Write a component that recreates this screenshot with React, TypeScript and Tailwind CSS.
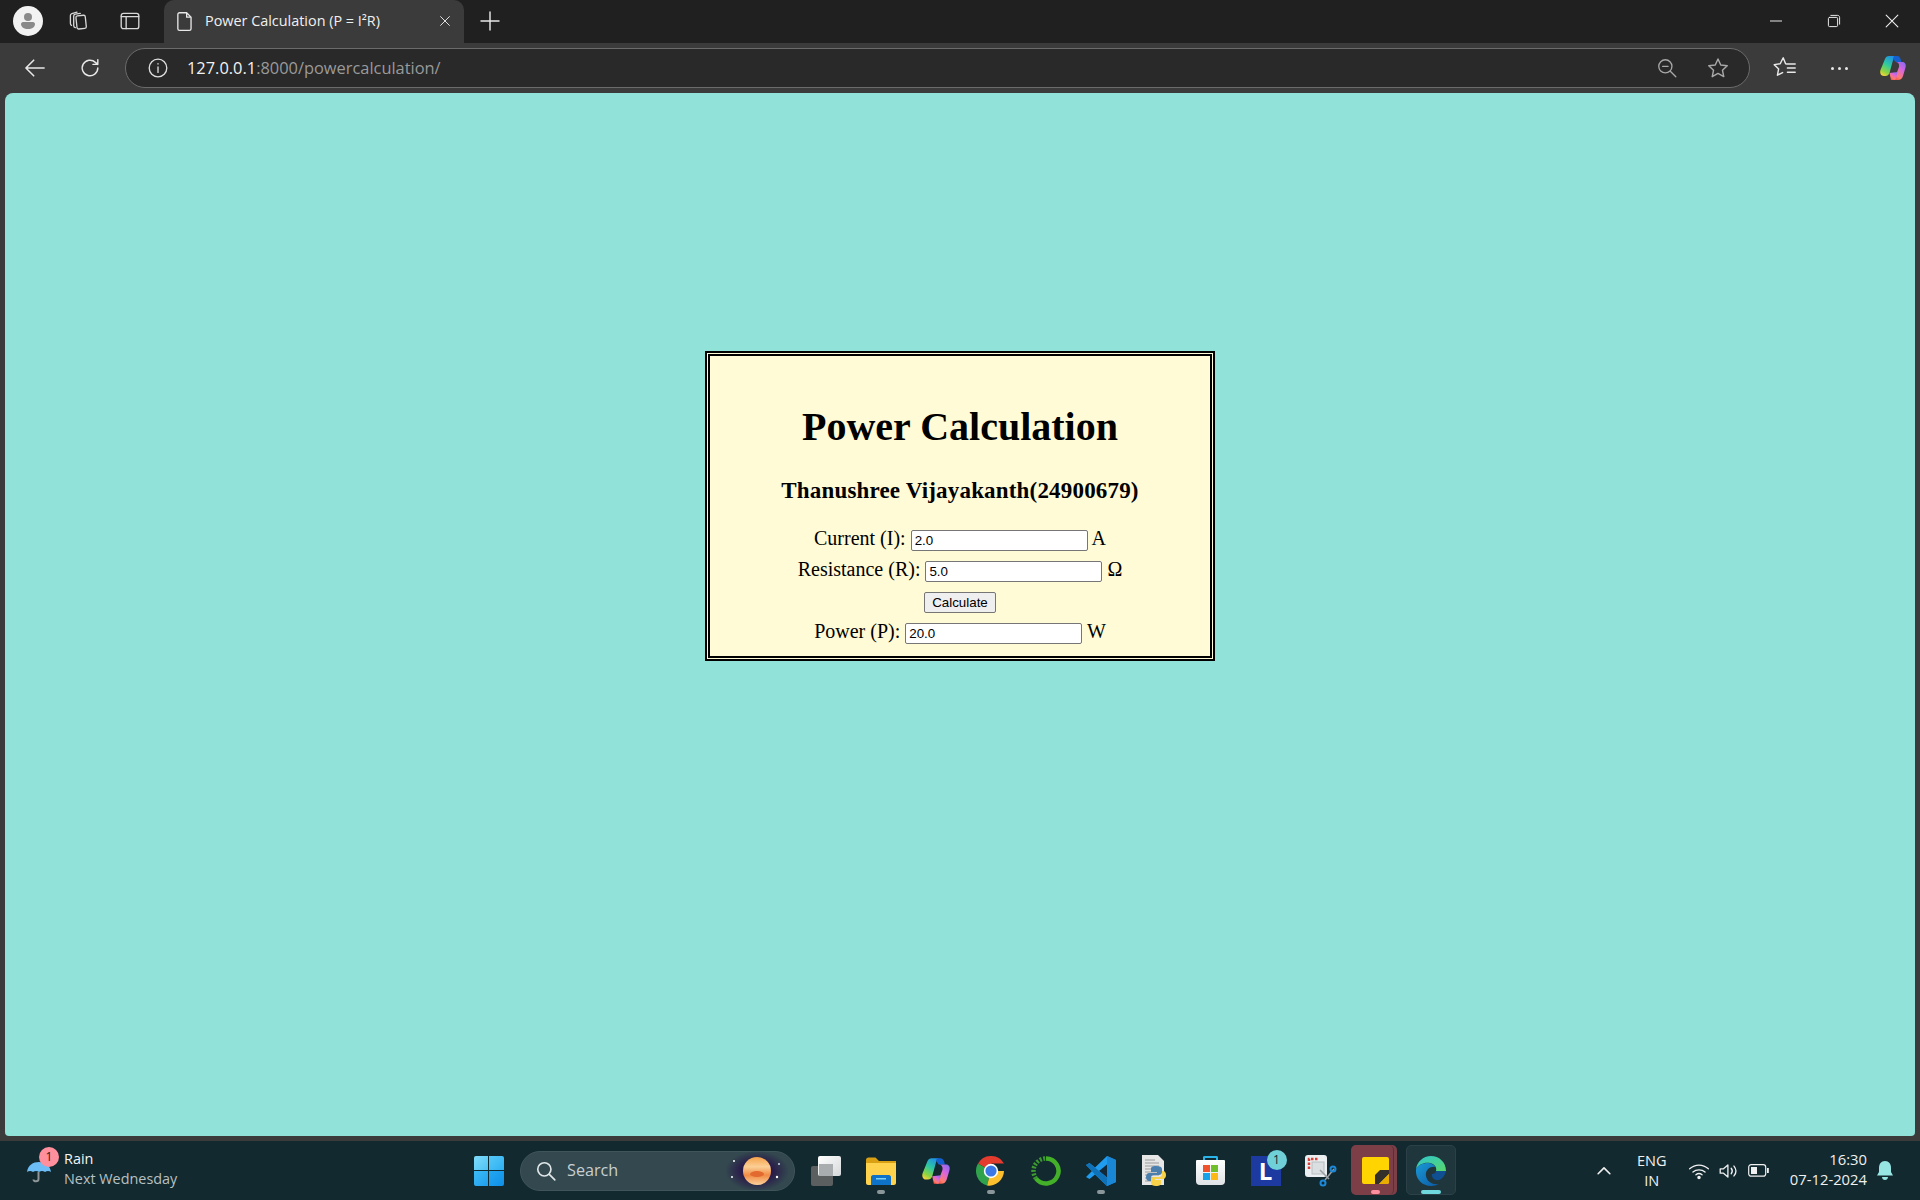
import React from 'react';

const SEGOE = "[font-family:'Open_Sans','Noto_Sans',sans-serif]";

const Stroke = ({ size = 20, children, className = '' }: { size?: number; children: React.ReactNode; className?: string }) => (
  <svg width={size} height={size} viewBox="0 0 20 20" fill="none" stroke="currentColor" strokeWidth="1.2" strokeLinecap="round" strokeLinejoin="round" className={className}>
    {children}
  </svg>
);

const CopilotIcon = ({ size = 28 }: { size?: number }) => (
  <svg width={size} height={size} viewBox="0 0 28 28">
    <defs>
      <linearGradient id={`cpA${size}`} x1="0.7" y1="0" x2="0.2" y2="1">
        <stop offset="0" stopColor="#1f8fe8" />
        <stop offset="0.45" stopColor="#2fc9a0" />
        <stop offset="0.8" stopColor="#8fd440" />
        <stop offset="1" stopColor="#f5d33d" />
      </linearGradient>
      <linearGradient id={`cpB${size}`} x1="1" y1="0" x2="0.2" y2="1">
        <stop offset="0" stopColor="#7a6cf0" />
        <stop offset="0.4" stopColor="#d865e0" />
        <stop offset="0.75" stopColor="#ff7d6a" />
        <stop offset="1" stopColor="#f0453a" />
      </linearGradient>
    </defs>
    <path d="M10 2h8c-2 0-3 1-3.700 3L10.500 19c-.8 2-2 3-4 3H5c-3 0-4.500-3-3.500-6L6 5c.7-2 2-3 4-3z" fill={`url(#cpA${size})`} />
    <path d="M15 2h3c2 0 3 1.300 3.500 3l.9 3H16.500L14.300 5c.2-1.500 .2-3 .7-3z" fill="#1560d0" />
    <path d="M17 8h6.500c2.500 0 4 2.500 3 5.500L24 22c-.8 2.500-2.500 4-5 4h-7c2 0 3.500-1 4.200-3L20 13c.6-2-.5-5-3-5z" fill={`url(#cpB${size})`} />
    <path d="M10.500 19l1.500 7h3c1.500 0 2-1 2.500-3l1-5z" fill={`url(#cpB${size})`} />
  </svg>
);

const WindowsLogo = () => (
  <div className="grid grid-cols-2 gap-[1px] w-[30px] h-[30px]">
    <div className="bg-gradient-to-br from-[#7fdcfb] to-[#4cc2f5] rounded-tl-[2px]" />
    <div className="bg-gradient-to-br from-[#55c8f7] to-[#2cb0f2] rounded-tr-[2px]" />
    <div className="bg-gradient-to-br from-[#3cbcf6] to-[#1f9fee] rounded-bl-[2px]" />
    <div className="bg-gradient-to-br from-[#22a8f2] to-[#0f8fe8] rounded-br-[2px]" />
  </div>
);

const Jupiter = () => (
  <svg width="64" height="40" viewBox="0 0 64 40">
    <defs>
      <radialGradient id="sky">
        <stop offset="0.5" stopColor="#2a1c4a" />
        <stop offset="1" stopColor="#2a1c4a" stopOpacity="0" />
      </radialGradient>
      <linearGradient id="planet" x1="0" y1="0" x2="0" y2="1">
        <stop offset="0" stopColor="#f7a24a" />
        <stop offset="0.35" stopColor="#fbcf95" />
        <stop offset="0.65" stopColor="#f08b45" />
        <stop offset="1" stopColor="#fbd39c" />
      </linearGradient>
    </defs>
    <ellipse cx="32" cy="20" rx="32" ry="20" fill="url(#sky)" />
    <circle cx="32" cy="20" r="14" fill="url(#planet)" />
    <ellipse cx="32" cy="23" rx="7" ry="3" fill="#e2692f" />
    <circle cx="9" cy="10" r="1" fill="#fff" />
    <circle cx="7" cy="26" r="1" fill="#fff" />
    <circle cx="54" cy="13" r="1" fill="#cde" />
    <circle cx="52" cy="26" r="1.2" fill="#fff" />
  </svg>
);

const TaskView = () => (
  <div className="relative w-[30px] h-[30px]">
    <div className="absolute left-0 bottom-0 w-[22px] h-[20px] bg-[#5c5f60] rounded-[2px]" />
    <div className="absolute right-0 top-0 w-[23px] h-[20px] bg-gradient-to-br from-white to-[#d5d8da] rounded-[2px]" />
    <div className="absolute left-[8px] top-[8px] w-[14px] h-[12px] bg-[#a9adaf]" />
  </div>
);

const FolderIcon = () => (
  <svg width="30" height="28" viewBox="0 0 30 28">
    <path d="M0 3c0-1.500 1-2.500 2.500-2.500h7L13 4h17v4H0z" fill="#d9a013" />
    <path d="M0 6h30v20c0 1-1 2-2 2H2c-1 0-2-1-2-2z" fill="#ffd24d" />
    <path d="M5 20c0-1 1-2 2-2h16c1 0 2 1 2 2v8H5z" fill="#0f72c9" />
    <rect x="10" y="21" width="10" height="1.500" fill="#7fd0f5" />
  </svg>
);

const ChromeIcon = () => (
  <svg width="30" height="30" viewBox="0 0 30 30">
    <path d="M15 15 2 7.500A15 15 0 0 1 28 7.500H15z" fill="#e33b2e" />
    <path d="M15 15 2 7.500A15 15 0 0 0 11 29.500z" fill="#2fa24b" />
    <path d="M15 15h13A15 15 0 0 1 11 29.500z" fill="#fbc02d" />
    <circle cx="15" cy="15" r="7.200" fill="#fff" />
    <circle cx="15" cy="15" r="5.600" fill="#3b78e7" />
  </svg>
);

const RingIcon = () => (
  <svg width="30" height="30" viewBox="0 0 30 30" fill="none">
    <path d="M15 2.500A12.500 12.500 0 1 1 5 22.500" stroke="#44b02a" strokeWidth="4.500" />
    <path d="M5 22.500A12.500 12.500 0 0 1 15 2.500" stroke="#3d9a30" strokeWidth="4.500" strokeDasharray="2 1.500" />
  </svg>
);

const VsCodeIcon = () => (
  <svg width="30" height="30" viewBox="0 0 30 30">
    <path d="M21 0 30 4v22l-9 4L9 18.500 3.500 23 0 21l6-6-6-6 3.500-2L9 11.500z" fill="#1f9cf0" />
    <path d="M21 0v30l9-4V4z" fill="#1a86d6" />
    <path d="M21 8.500 13 15l8 6.500z" fill="#12293a" />
    <path d="M0 9l3.500-2L21 21.500V30L9 18.500z" fill="#0f72b8" />
  </svg>
);

const PythonFileIcon = () => (
  <svg width="30" height="32" viewBox="0 0 30 32">
    <path d="M1 0h16l6 6v24H1z" fill="#e6e6e6" />
    <g stroke="#9a9a9a" strokeWidth="1">
      <path d="M4 5h10M4 8h14M4 11h14M4 14h14M4 17h14M4 20h14M4 23h14M4 26h14" />
    </g>
    <path d="M15 11c-4 0-5 1-5 3v3h6v1H8c-2 0-3 2-3 4s1 4 3 4h2v-3c0-2 1-3 3-3h5c1.500 0 3-1 3-3v-3c0-2-2-3-6-3z" fill="#4a7fae" />
    <path d="M15 31c4 0 5-1 5-3v-3h-6v-1h8c2 0 3-2 3-4s-1-4-3-4h-1v3c0 2-1 3-3 3h-5c-1.500 0-3 1-3 3v3c0 2 2 3 5 3z" fill="#f7d148" />
  </svg>
);

const StoreIcon = () => (
  <div className="relative w-[30px] h-[30px]">
    <div className="absolute left-[7px] top-0 w-[15px] h-[7px] border-2 border-b-0 border-[#2bb4ea] rounded-t-[2px]" />
    <div className="absolute left-0 top-[4px] w-[29px] h-[25px] rounded-b-[4px] rounded-t-[1px] bg-gradient-to-b from-white to-[#dfe3e6] flex items-center justify-center">
      <div className="grid grid-cols-2 gap-[1px] w-[15px] h-[15px]">
        <div className="bg-[#f0532c]" />
        <div className="bg-[#6fbf2a]" />
        <div className="bg-[#16a2e8]" />
        <div className="bg-[#fdb813]" />
      </div>
    </div>
  </div>
);

const LIcon = () => (
  <div className="relative w-[30px] h-[30px] bg-[#1d3aa0] flex items-center justify-center">
    <span className="text-white text-[24px] font-bold leading-none [font-family:'Open_Sans',sans-serif]">L</span>
    <div className="absolute -top-[6px] -right-[6px] w-[20px] h-[20px] rounded-full bg-[#6fd0d8] flex items-center justify-center text-[12px] text-[#12292f] [font-family:'Open_Sans',sans-serif]">1</div>
  </div>
);

const SnipIcon = () => (
  <svg width="32" height="32" viewBox="0 0 32 32" fill="none">
    <rect x="0" y="0" width="22" height="22" rx="3" fill="#eceff1" />
    <path d="M4 14V4h10" stroke="#d8413a" strokeWidth="2.500" strokeDasharray="2.500 1.500" />
    <rect x="7" y="7" width="12" height="12" fill="#dbdfe2" stroke="#b8bdc0" />
    <path d="M15 15l9 9M29 14 20 25" stroke="#9aa0a4" strokeWidth="1.500" />
    <circle cx="28" cy="14" r="2.500" stroke="#1e88d8" strokeWidth="2" />
    <circle cx="18" cy="28" r="2.500" stroke="#1e88d8" strokeWidth="2" />
  </svg>
);

const StickyIcon = () => (
  <svg width="27" height="27" viewBox="0 0 27 27">
    <rect width="27" height="27" rx="2" fill="#ffd400" />
    <path d="M13 27V18l5-5h9v4L17 27z" fill="#33302c" />
    <path d="M17 27 27 17v8c0 1-1 2-2 2z" fill="#e8ad00" />
  </svg>
);

const EdgeIcon = () => (
  <svg width="30" height="30" viewBox="0 0 30 30">
    <defs>
      <linearGradient id="edgeA" x1="0" y1="0" x2="1" y2="1">
        <stop offset="0" stopColor="#2fc6d0" />
        <stop offset="1" stopColor="#58d66a" />
      </linearGradient>
      <linearGradient id="edgeB" x1="0" y1="0" x2="1" y2="1">
        <stop offset="0" stopColor="#1a9ad6" />
        <stop offset="1" stopColor="#0c59a4" />
      </linearGradient>
    </defs>
    <path d="M15 0C7 0 1 6 0 13c3-5 9-7 14-6 5 1 7 5 6 8h10C30 6 23 0 15 0z" fill="url(#edgeA)" />
    <path d="M0 13c-1 9 5 17 15 17 3 0 6-1 8-2-6 1-12-2-13-8-1-5 3-10 10-9-2-2-5-4-8-4C7 7 2 9 0 13z" fill="url(#edgeB)" />
    <path d="M20 15c0 2-2 3-4 3-1 3 2 7 7 6 3-1 6-4 7-9z" fill="#0f4f92" />
  </svg>
);

const TaskItem = ({ children, dot, active }: { children: React.ReactNode; dot?: string; active?: boolean }) => (
  <div className="relative w-[55px] h-[59px] flex items-center justify-center">
    {active && <div className="absolute left-[2.500px] top-[4px] w-[50px] h-[50px] rounded-[5px] bg-[#1f363c] border border-[#2b4147]" />}
    <div className="relative">{children}</div>
    {dot && <div className={`absolute bottom-[6px] left-1/2 -translate-x-1/2 h-[4px] rounded-full ${dot}`} />}
  </div>
);

const FormRow = ({ label, value, unit }: { label: string; value: string; unit: string }) => (
  <div className="h-[31px] text-center whitespace-pre">
    {label}{' '}
    <input
      readOnly
      value={value}
      className="w-[177px] h-[21px] px-[3px] bg-white border border-[#767676] rounded-[2px] text-[13.33px] text-black [font-family:'Liberation_Sans',Arial,sans-serif] outline-none"
    />{' '}
    {unit}
  </div>
);

export default function App() {
  return (
    <div className={`w-[1920px] h-[1200px] overflow-hidden flex flex-col bg-[#3b3b3b] ${SEGOE}`}>
      {/* Tab strip */}
      <div className="h-[43px] shrink-0 bg-[#202020] flex items-center text-white pb-[1px]">
        <div className="w-[30px] h-[30px] ml-[13px] rounded-full bg-[#f2f2f2] flex items-center justify-center">
          <svg width="20" height="20" viewBox="0 0 20 20" fill="#8a8a8a">
            <circle cx="10" cy="6" r="4" />
            <path d="M3 13c0-1 1-2 2-2h10c1 0 2 1 2 2 0 3-3 5-7 5s-7-2-7-5z" />
          </svg>
        </div>
        <Stroke size={22} className="ml-[23px] text-[#d8d8d8]">
          <rect x="9.500" y="5" width="8.500" height="12" rx="1.500" transform="rotate(-6 14 11)" />
          <path d="M8.500 16c-1-.2-1.500-1-1.500-2V5.500c0-1 .7-1.700 1.500-1.800L13 3" />
          <path d="M5 14c-.8-.3-1-1-1-2V5c0-1 .5-1.600 1.300-1.800L10 2" />
        </Stroke>
        <Stroke size={22} className="ml-[31px] text-[#d8d8d8]">
          <rect x="2" y="3" width="16" height="14" rx="2" />
          <path d="M2 6h16M6.500 6v11" />
        </Stroke>
        <div className="ml-[23px] h-[43px] -mb-[1px] pb-[1px] w-[300px] bg-[#3b3b3b] rounded-t-[10px] flex items-center pl-[10px]">
          <Stroke size={22} className="text-[#e8e8e8] shrink-0">
            <path d="M5 2.500h6.500l4 4V17c0 .8-.6 1.500-1.500 1.500H5c-.8 0-1.500-.7-1.500-1.500V4c0-.8.7-1.500 1.500-1.500zM11.500 2.500V6.500h4" />
          </Stroke>
          <span className="ml-[9px] w-[232px] text-[14.400px] leading-none text-[#f0f0f0] whitespace-nowrap">Power Calculation (P = I²R)</span>
          <Stroke size={16} className="text-[#e8e8e8]">
            <path d="M4.500 4.500l11 11M15.500 4.500l-11 11" />
          </Stroke>
        </div>
        <Stroke size={24} className="ml-[14px] text-[#e8e8e8]">
          <path d="M10 2.500v15M2.500 10h15" />
        </Stroke>
        <div className="ml-auto flex items-center text-[#f0f0f0]">
          <div className="w-[58px] flex justify-center"><Stroke size={16}><path d="M3 10h14" /></Stroke></div>
          <div className="w-[58px] flex justify-center">
            <Stroke size={16}>
              <rect x="3" y="5.500" width="11.500" height="11.500" rx="1.500" />
              <path d="M6 3h8.500C16 3 17 4 17 5.500V14" />
            </Stroke>
          </div>
          <div className="w-[57px] flex justify-center"><Stroke size={18}><path d="M3.500 3.500l13 13M16.500 3.500l-13 13" /></Stroke></div>
        </div>
      </div>

      {/* Toolbar */}
      <div className="h-[50px] shrink-0 flex items-center text-[#e8e8e8]">
        <Stroke size={26} className="ml-[22px]">
          <path d="M17 10H3M9 4l-6 6 6 6" />
        </Stroke>
        <Stroke size={24} className="ml-[30px]">
          <path d="M16.500 10a6.500 6.500 0 1 1-2-4.700L16.500 7M16.500 3v4h-4" />
        </Stroke>
        <div className="ml-[23px] h-[40px] w-[1625px] rounded-full bg-[#292929] border border-[#6b6b6b] flex items-center">
          <Stroke size={22} className="ml-[21px] text-[#e0e0e0]">
            <circle cx="10" cy="10" r="8" />
            <path d="M10 9v5M10 6v.4" />
          </Stroke>
          <span className="ml-[18px] text-[16.400px] leading-none text-[#f2f2f2]">
            127.0.0.1<span className="text-[#9a9a9a]">:8000/powercalculation/</span>
          </span>
          <div className="ml-auto flex items-center text-[#a8a8a8] mr-[19px] gap-[28px]">
            <Stroke size={22}>
              <circle cx="8.500" cy="8.500" r="6" />
              <path d="M6 8.500h5M13 13l5 5" />
            </Stroke>
            <Stroke size={24}>
              <path d="M10 2.500l2.300 5 5.400.6-4 3.700 1.100 5.400L10 14.500l-4.800 2.700 1.100-5.400-4-3.700 5.400-.6z" />
            </Stroke>
          </div>
        </div>
        <Stroke size={24} className="ml-[23px]">
          <path d="M11.500 6.700 10.500 6.500 8.500 1.500 6 6.500 1 7.200 4.700 10.800 3.700 16 8 13.800M12 6.700h6.500M12 10h6.500M12 13.500h6.500" />
        </Stroke>
        <div className="ml-[34px] flex gap-[4px]">
          <div className="w-[3px] h-[3px] rounded-full bg-[#e8e8e8]" />
          <div className="w-[3px] h-[3px] rounded-full bg-[#e8e8e8]" />
          <div className="w-[3px] h-[3px] rounded-full bg-[#e8e8e8]" />
        </div>
        <div className="ml-[31px]"><CopilotIcon /></div>
      </div>

      {/* Page */}
      <div className="h-[1043px] shrink-0 mx-[5px] rounded-t-[8px] rounded-b-[4px] bg-[#91e3da] pt-[258px]">
        <div className="w-[510px] h-[310px] mx-auto border-[5px] border-double border-black bg-[#fffbd7] text-black [font-family:'Liberation_Serif','Times_New_Roman',serif] text-[20px] leading-[23px]">
          <h1 className="mt-[48px] text-center text-[40px] leading-[46px] font-bold">Power Calculation</h1>
          <h2 className="mt-[27px] text-center text-[23px] leading-[27px] font-bold tracking-[0.18px]">Thanushree Vijayakanth(24900679)</h2>
          <div className="mt-[23px]">
            <FormRow label="Current (I):" value="2.0" unit="A" />
            <FormRow label="Resistance (R):" value="5.0" unit="Ω" />
            <div className="h-[31px] text-center">
              <button className="w-[72px] h-[21px] bg-[#efefef] border border-[#767676] rounded-[2px] text-[13.33px] leading-none text-black [font-family:'Liberation_Sans',Arial,sans-serif]">Calculate</button>
            </div>
            <FormRow label="Power (P):" value="20.0" unit="W" />
          </div>
        </div>
      </div>

      {/* Taskbar */}
      <div className="mt-auto h-[59px] shrink-0 bg-[#12292f] flex items-center text-white">
        <div className="w-[461px] shrink-0 flex items-center pl-[26px]">
          <div className="relative w-[24px] h-[30px] mt-[7px]">
            <svg width="26" height="30" viewBox="0 0 26 30" fill="none">
              <path d="M1 13C2 6 7 3 13 3s11 3 12 10c-2-1.500-4-1.500-6 0-2-1.500-4-1.500-6 0-2-1.500-4-1.500-6 0-2-1.500-4-1.500-6 0z" fill="#6cbcf5" />
              <path d="M12.500 13v7c0 3-5 3-5 .5" stroke="#8f9698" strokeWidth="2" />
            </svg>
            <div className="absolute -top-[12px] left-[13px] w-[20px] h-[20px] rounded-full bg-[#ff8f9c] flex items-center justify-center text-[12px] text-[#222]">1</div>
          </div>
          <div className="ml-[14px] text-[14.400px] leading-[20px] -mt-[3px]">
            <div className="text-[#f5f5f5]">Rain</div>
            <div className="text-[#b8c0c2]">Next Wednesday</div>
          </div>
        </div>
        <TaskItem><WindowsLogo /></TaskItem>
        <div className="w-[275px] h-[40px] ml-[4px] mr-[3px] rounded-full bg-[#33494f] border border-[#3f555a] flex items-center pl-[14px] shrink-0">
          <Stroke size={22} className="text-[#e0e6e8]">
            <circle cx="8.500" cy="8.500" r="6" strokeWidth="1.500" />
            <path d="M13 13l5 5" strokeWidth="1.500" />
          </Stroke>
          <span className="ml-[10px] text-[16.200px] text-[#c8d0d2]">Search</span>
          <div className="ml-auto mr-[5px]"><Jupiter /></div>
        </div>
        <TaskItem><TaskView /></TaskItem>
        <TaskItem dot="w-[8px] bg-[#8a9699]"><FolderIcon /></TaskItem>
        <TaskItem><CopilotIcon size={30} /></TaskItem>
        <TaskItem dot="w-[8px] bg-[#8a9699]"><ChromeIcon /></TaskItem>
        <TaskItem><RingIcon /></TaskItem>
        <TaskItem dot="w-[8px] bg-[#8a9699]"><VsCodeIcon /></TaskItem>
        <TaskItem><PythonFileIcon /></TaskItem>
        <TaskItem><StoreIcon /></TaskItem>
        <TaskItem><LIcon /></TaskItem>
        <TaskItem><SnipIcon /></TaskItem>
        <div className="relative w-[55px] h-[59px] flex items-center justify-center">
          <div className="absolute left-[25px] top-[4px] w-[24px] h-[50px] rounded-r-[5px] bg-[#7d3f47]" />
          <div className="absolute left-[3px] top-[4px] w-[43px] h-[50px] rounded-[5px] bg-[#7d3f47] border-r border-[#5a3038]" />
          <div className="relative"><StickyIcon /></div>
          <div className="absolute bottom-[6px] left-[23px] w-[9px] h-[4px] rounded-full bg-[#ff8f9c]" />
        </div>
        <TaskItem active dot="w-[20px] bg-[#6fd8de]"><EdgeIcon /></TaskItem>

        <div className="ml-auto flex items-center text-[#f0f0f0]">
          <Stroke size={18} className="mr-[19px]">
            <path d="M3.500 13 10 6.500l6.500 6.500" strokeWidth="1.800" />
          </Stroke>
          <div className="w-[40px] text-center text-[14.500px] leading-[20px] mr-[16px]">
            <div>ENG</div>
            <div>IN</div>
          </div>
          <Stroke size={22} className="mr-[8px]">
            <path d="M1.500 8c5-4.500 12-4.500 17 0M4.500 11c3-2.700 8-2.700 11 0M7.200 13.500c1.500-1.300 4-1.300 5.600 0" />
            <circle cx="10" cy="16" r="1" fill="currentColor" />
          </Stroke>
          <Stroke size={22} className="mr-[8px]">
            <path d="M2 8v4h3l4 3.500v-11L5 8zM12 7.500c1.200 1.500 1.200 3.500 0 5M14.500 5.500c2.200 2.700 2.200 6.300 0 9" />
          </Stroke>
          <svg width="21" height="13" viewBox="0 0 21 13" fill="none" className="mr-[21px]">
            <rect x="0.700" y="0.700" width="17" height="11.500" rx="2.500" stroke="currentColor" strokeWidth="1.200" />
            <rect x="3" y="3" width="6" height="7" fill="currentColor" />
            <rect x="19" y="4" width="1.800" height="5" fill="currentColor" />
          </svg>
          <div className="text-right text-[14.800px] leading-[20px] whitespace-nowrap -mt-[3px]">
            <div>16:30</div>
            <div>07-12-2024</div>
          </div>
          <svg width="18" height="20" viewBox="0 0 18 20" className="ml-[9px] mr-[26px]" fill="#97e6e4">
            <path d="M9 0c4 0 6 3 6 7v4l2 3.500H1L3 11V7c0-4 2-7 6-7zM6 16h6c0 2-1.500 3-3 3s-3-1-3-3z" />
          </svg>
        </div>
      </div>
    </div>
  );
}
